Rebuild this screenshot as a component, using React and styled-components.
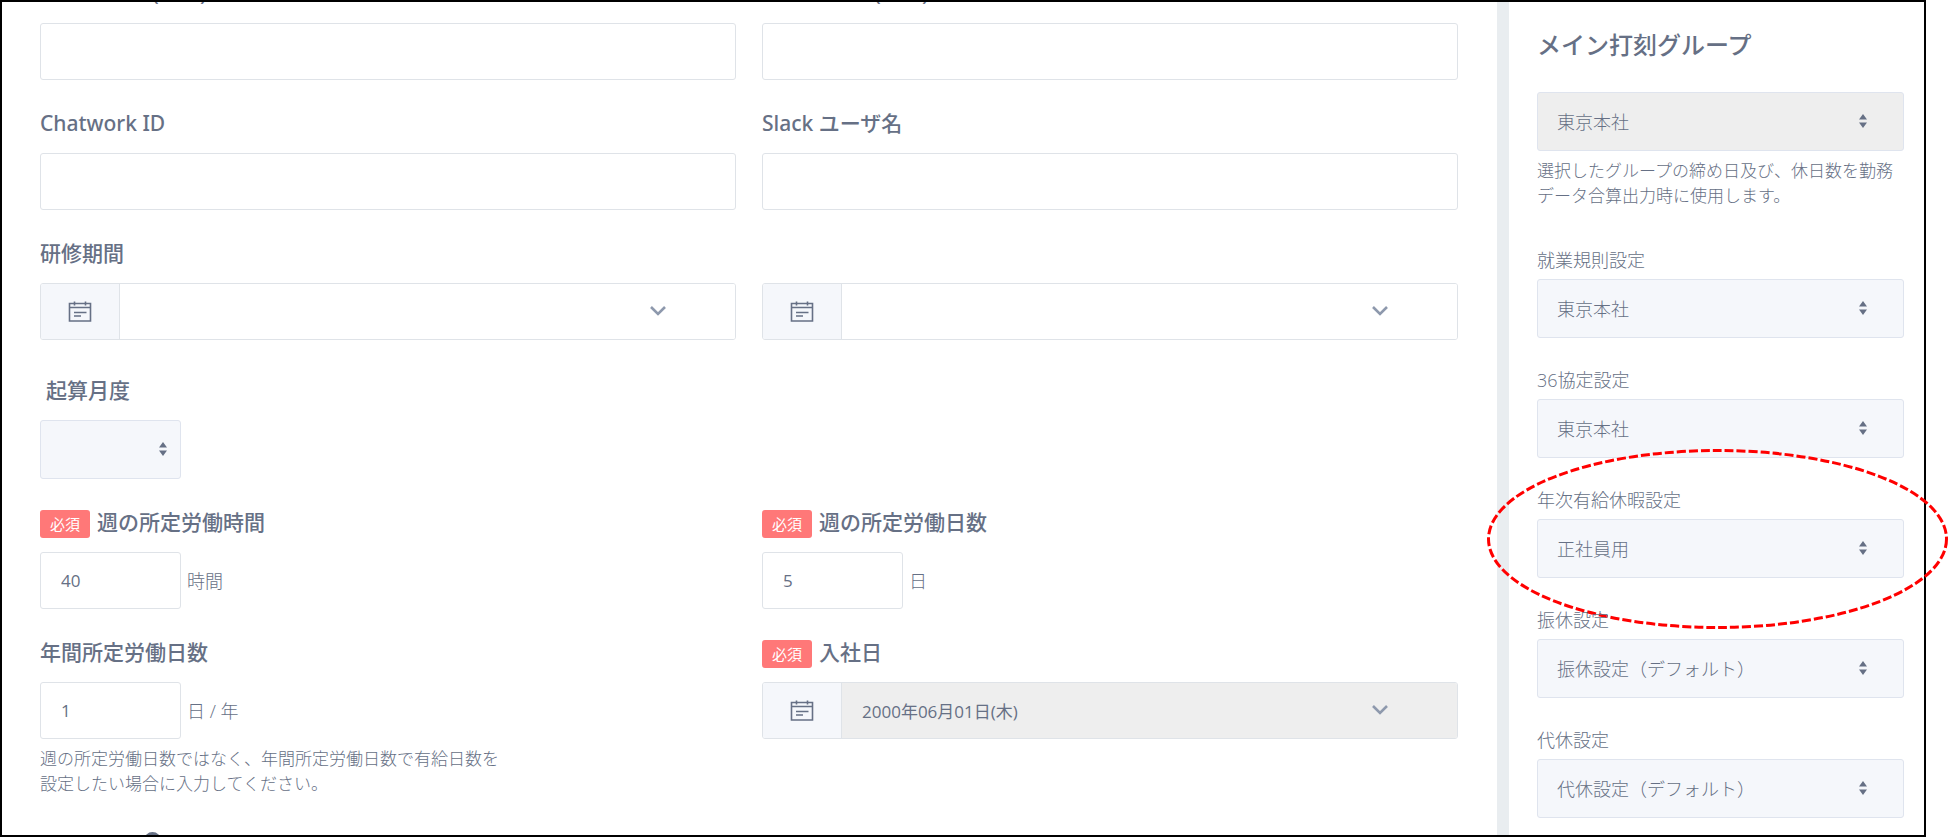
import styled, { createGlobalStyle } from 'styled-components';

const sideSettings = [
    { id: 'work-rule', label: '就業規則設定', value: '東京本社' },
    { id: 'agreement-36', label: '36協定設定', value: '東京本社' },
    { id: 'paid-leave', label: '年次有給休暇設定', value: '正社員用', marked: true },
    { id: 'transfer-holiday', label: '振休設定', value: '振休設定（デフォルト）' },
    { id: 'compensatory-holiday', label: '代休設定', value: '代休設定（デフォルト）' },
];

const CalendarIcon = () => (
    <svg width="24" height="22" viewBox="0 0 24 22" fill="none" stroke="#667085" strokeWidth="1.6" aria-hidden="true">
        <path d="M1.5 2.5h21v17.5h-21z M1.5 6.5h21" />
        <path d="M6.5 0.5v4 M17.5 0.5v4" />
        <path d="M6 11.5h12.5 M6 15h7" />
    </svg>
);

const ChevronIcon = () => (
    <svg width="18" height="12" viewBox="0 0 18 12" fill="none" stroke="#8e99ad" strokeWidth="2.6" aria-hidden="true">
        <path d="M2 1l7 7 7-7" />
    </svg>
);

const SelectBox = ({ id, value, label, disabled, small }) => (
    <SelectWrap $small={small}>
        <Select id={id} defaultValue={value} aria-label={label} disabled={disabled}>
            <option value={value}>{value}</option>
        </Select>
        <SortArrows $small={small} width="8" height="14" viewBox="0 0 8 14" aria-hidden="true">
            <path d="M4 0l4 5.5H0z M4 14l4-5.5H0z" fill="#667085" />
        </SortArrows>
    </SelectWrap>
);

const DateField = ({ id, value = '', label, disabled }) => (
    <DateBox>
        <DateAddon>
            <CalendarIcon />
        </DateAddon>
        <DateBody $disabled={disabled}>
            <DateInput type="text" id={id} defaultValue={value} aria-label={label} disabled={disabled} />
            <ChevronIcon />
        </DateBody>
    </DateBox>
);

const App = () => {
    return (
        <Page>
            <GlobalStyle />
            <Frame>
                <Main>
                    <Form>
                        <Row>
                            <Field>
                                <Label htmlFor="extra-1">Other Mail (Text)</Label>
                                <TextInput type="text" id="extra-1" />
                            </Field>
                            <Field>
                                <Label htmlFor="extra-2">Other Mail (Text)</Label>
                                <TextInput type="text" id="extra-2" />
                            </Field>
                        </Row>
                        <Row>
                            <Field>
                                <Label htmlFor="chatwork">Chatwork ID</Label>
                                <TextInput type="text" id="chatwork" />
                            </Field>
                            <Field>
                                <Label htmlFor="slack">Slack ユーザ名</Label>
                                <TextInput type="text" id="slack" />
                            </Field>
                        </Row>
                        <Row $bottom>
                            <Field>
                                <Label htmlFor="training-start">研修期間</Label>
                                <DateField id="training-start" />
                            </Field>
                            <Field>
                                <DateField id="training-end" label="研修期間 終了" />
                            </Field>
                        </Row>
                        <Row $spaced>
                            <Field>
                                <Label htmlFor="start-month" $indent>起算月度</Label>
                                <SelectBox id="start-month" value="" small />
                            </Field>
                        </Row>
                        <Row>
                            <Field>
                                <Label htmlFor="week-hours"><Badge>必須</Badge>週の所定労働時間</Label>
                                <UnitRow>
                                    <TextInput type="text" id="week-hours" defaultValue="40" $short />
                                    <Unit>時間</Unit>
                                </UnitRow>
                            </Field>
                            <Field>
                                <Label htmlFor="week-days"><Badge>必須</Badge>週の所定労働日数</Label>
                                <UnitRow>
                                    <TextInput type="text" id="week-days" defaultValue="5" $short />
                                    <Unit>日</Unit>
                                </UnitRow>
                            </Field>
                        </Row>
                        <Row>
                            <Field>
                                <Label htmlFor="year-days">年間所定労働日数</Label>
                                <UnitRow>
                                    <TextInput type="text" id="year-days" defaultValue="1" $short />
                                    <Unit>日 / 年</Unit>
                                </UnitRow>
                                <HelpText>
                                    週の所定労働日数ではなく、年間所定労働日数で有給日数を<br />
                                    設定したい場合に入力してください。
                                </HelpText>
                            </Field>
                            <Field>
                                <Label htmlFor="join-date"><Badge>必須</Badge>入社日</Label>
                                <DateField id="join-date" value="2000年06月01日(木)" disabled />
                            </Field>
                        </Row>
                        <HelpRow>
                            <HelpButton type="button" aria-label="ヘルプ" />
                        </HelpRow>
                    </Form>
                </Main>
                <Side>
                    <SideTitle htmlFor="main-group">メイン打刻グループ</SideTitle>
                    <SelectBox id="main-group" value="東京本社" disabled />
                    <HelpText>選択したグループの締め日及び、休日数を勤務データ合算出力時に使用します。</HelpText>
                    <SideList>
                        {sideSettings.map((item) => (
                            <SideField key={item.id}>
                                <SideLabel htmlFor={item.id}>{item.label}</SideLabel>
                                <SelectBox id={item.id} value={item.value} />
                                {item.marked && (
                                    <Marker viewBox="0 0 461 180" preserveAspectRatio="none" aria-hidden="true">
                                        <ellipse cx="230.5" cy="90" rx="229" ry="88.5" />
                                    </Marker>
                                )}
                            </SideField>
                        ))}
                    </SideList>
                </Side>
            </Frame>
        </Page>
    );
}

const GlobalStyle = createGlobalStyle`
    * {
        box-sizing: border-box;
    }

    body {
        margin: 0;
        background-color: #ffffff;
        color: #667085;
        font-family: "Open Sans", "Noto Sans CJK JP", sans-serif;
    }

    input, select, button {
        font-family: inherit;
        color: inherit;
    }
`

const Page = styled.div`
    height: 100vh;
    padding-right: 22px;
    overflow: hidden;
`

const Frame = styled.div`
    display: flex;
    height: 100%;
    border: 2px solid #000000;
`

const Main = styled.main`
    flex: 1;
    min-width: 0;
    padding: 0 39px 0 38px;
    overflow: hidden;
`

/* scrolled a little, so the first labels are cut by the frame */
const Form = styled.form`
    margin-top: -24px;
`

const Row = styled.div`
    display: grid;
    grid-template-columns: 1fr 1fr;
    column-gap: 26px;
    align-items: ${({ $bottom }) => ($bottom ? 'end' : 'start')};
    margin-top: ${({ $spaced }) => ($spaced ? '35px' : '28px')};

    &:first-child {
        margin-top: 0;
    }
`

const Field = styled.div`
    min-width: 0;
`

const Label = styled.label`
    display: flex;
    align-items: flex-start;
    height: 30px;
    margin-bottom: 15px;
    padding-left: ${({ $indent }) => ($indent ? '6px' : '0')};
    font-family: "Noto Sans", "Noto Sans CJK JP", sans-serif;
    font-size: 21px;
    font-weight: 500;
    line-height: 30px;
    white-space: pre;
`

const Badge = styled.span`
    margin: 3px 7px 0 0;
    padding: 0 10px;
    border-radius: 3px;
    background-color: #ff7878;
    color: #ffffff;
    font-size: 15px;
    font-weight: 400;
    line-height: 28px;
`

const TextInput = styled.input`
    display: block;
    width: ${({ $short }) => ($short ? '141px' : '100%')};
    height: 57px;
    padding: 0 20px;
    border: 1px solid #dfe3e8;
    border-radius: 3px;
    background-color: #ffffff;
    font-size: 17px;
`

const UnitRow = styled.div`
    display: flex;
    align-items: center;
    gap: 6px;
`

const Unit = styled.span`
    font-size: 18px;
    font-weight: 300;
    line-height: 24px;
`

const HelpText = styled.p`
    margin: 7px 0 0;
    font-size: 17px;
    font-weight: 300;
    line-height: 25px;
`

const DateBox = styled.div`
    display: flex;
    height: 57px;
    border: 1px solid #dfe3e8;
    border-radius: 3px;
    overflow: hidden;
`

const DateAddon = styled.span`
    display: flex;
    flex: 0 0 79px;
    align-items: center;
    justify-content: center;
    border-right: 1px solid #dfe3e8;
    background-color: #f5f7fb;
`

const DateBody = styled.div`
    display: flex;
    flex: 1;
    align-items: center;
    min-width: 0;
    padding-right: 68px;
    background-color: ${({ $disabled }) => ($disabled ? '#eeeeee' : '#ffffff')};
`

const DateInput = styled.input`
    flex: 1;
    min-width: 0;
    height: 100%;
    padding: 0 20px;
    border: 0;
    background: transparent;
    font-size: 17px;
`

const SelectWrap = styled.div`
    position: relative;
    width: ${({ $small }) => ($small ? '141px' : '100%')};
`

const Select = styled.select`
    appearance: none;
    display: block;
    width: 100%;
    height: 59px;
    padding: 0 19px;
    border: 1px solid #dfe4ee;
    border-radius: 3px;
    background-color: #f5f7fb;
    font-size: 18px;
    font-weight: 300;

    &:disabled {
        background-color: #eeeeee;
        opacity: 1;
    }
`

const SortArrows = styled.svg`
    position: absolute;
    top: 22px;
    right: ${({ $small }) => ($small ? '14px' : '37px')};
    pointer-events: none;
`

const HelpRow = styled.div`
    padding: 36px 0 0 104px;
`

const HelpButton = styled.button`
    display: block;
    width: 17px;
    height: 17px;
    padding: 0;
    border: 0;
    border-radius: 50%;
    background-color: #667085;
`

const Side = styled.aside`
    flex: 0 0 427px;
    padding: 28px 20px 0 28px;
    border-left: 12px solid #e9edf0;
`

const SideTitle = styled.label`
    display: block;
    margin-bottom: 32px;
    font-size: 24px;
    font-weight: 500;
    line-height: 30px;
`

const SideList = styled.div`
    display: flex;
    flex-direction: column;
    gap: 30px;
    margin-top: 40px;
`

const SideField = styled.div`
    position: relative;
`

const SideLabel = styled.label`
    display: block;
    margin-bottom: 7px;
    font-size: 18px;
    font-weight: 300;
    line-height: 24px;
`

const Marker = styled.svg`
    position: absolute;
    top: -39px;
    left: -50px;
    width: calc(100% + 94px);
    height: 180px;
    fill: none;
    stroke: #ff0000;
    stroke-width: 3px;
    stroke-dasharray: 9 3;
    pointer-events: none;
`

export default App;
